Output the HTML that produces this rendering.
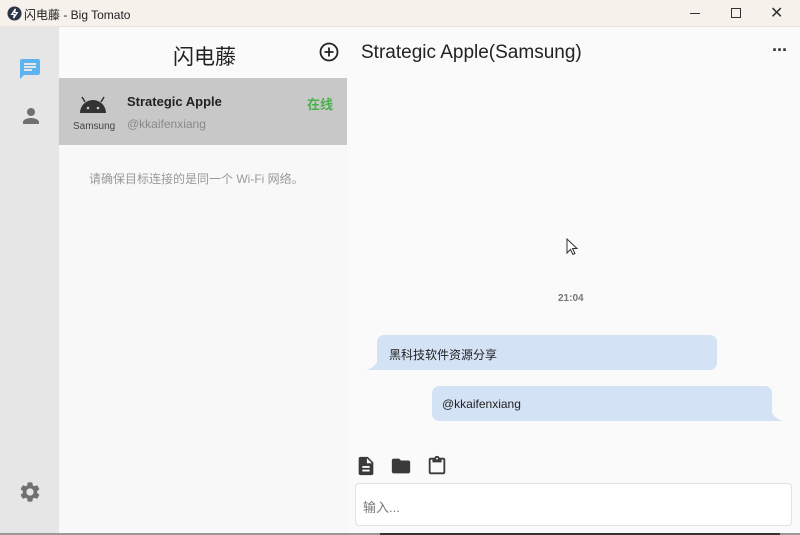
<!DOCTYPE html>
<html><head><meta charset="utf-8"><style>
*{margin:0;padding:0;box-sizing:border-box}
body{width:800px;height:535px;overflow:hidden;font-family:"Liberation Sans","Noto Sans CJK SC",sans-serif;background:#fafafa;position:relative}
.abs{position:absolute}
</style></head><body>
<div class="abs" style="left:0;top:0;width:800px;height:27px;background:#f6f1eb;border-bottom:1px solid #e8e3dd"></div>
<svg class="abs" style="left:7px;top:6px" width="15" height="15" viewBox="0 0 16 16"><circle cx="8" cy="8" r="7.5" fill="#2a3545"/><path d="M9 3 L5 9 H8 L7 13 L11 7 H8 Z" fill="none" stroke="#fff" stroke-width="1.3"/></svg>
<div class="abs" style="left:24px;top:6px;font-size:12px;color:#222">闪电藤 - Big Tomato</div>
<div class="abs" style="left:690px;top:13px;width:10px;height:1px;background:#333"></div>
<div class="abs" style="left:731px;top:8px;width:10px;height:10px;border:1px solid #333"></div>
<div class="abs" style="left:770px;top:3px;font-size:16px;color:#333">✕</div>

<div class="abs" style="left:0;top:27px;width:59px;height:508px;background:#e6e6e6"></div>
<svg class="abs" style="left:18px;top:57px" width="24" height="24" viewBox="0 0 24 24"><path d="M20 2H4c-1.1 0-2 .9-2 2v18l4-4h14c1.1 0 2-.9 2-2V4c0-1.1-.9-2-2-2zM6 9h12v2H6zm8 5H6v-2h8zm4-6H6V6h12z" fill="#5cb3f0"/></svg>
<svg class="abs" style="left:19px;top:104px" width="24" height="24" viewBox="0 0 24 24"><path d="M12 12c2.2 0 4-1.8 4-4s-1.8-4-4-4-4 1.8-4 4 1.8 4 4 4zm0 2c-2.7 0-8 1.3-8 4v2h16v-2c0-2.7-5.3-4-8-4z" fill="#707070"/></svg>
<svg class="abs" style="left:18px;top:480px" width="24" height="24" viewBox="0 0 24 24"><path d="M19.14 12.94c.04-.3.06-.61.06-.94 0-.32-.02-.64-.07-.94l2.03-1.58a.49.49 0 0 0 .12-.61l-1.92-3.32a.49.49 0 0 0-.59-.22l-2.39.96c-.5-.38-1.03-.7-1.620-.94l-.36-2.54a.48.48 0 0 0-.48-.41h-3.84c-.24 0-.43.17-.47.41l-.36 2.54c-.59.24-1.13.57-1.62.94l-2.39-.96a.48.48 0 0 0-.59.22L2.74 8.87c-.12.21-.08.47.12.61l2.03 1.58c-.05.3-.09.63-.09.94s.02.64.07.94l-2.03 1.58a.49.49 0 0 0-.12.61l1.92 3.32c.12.22.37.29.59.22l2.39-.96c.5.38 1.03.7 1.62.94l.36 2.54c.05.24.24.41.48.41h3.84c.24 0 .44-.17.47-.41l.36-2.54c.59-.24 1.13-.56 1.62-.94l2.39.96c.22.08.47 0 .59-.22l1.92-3.32c.12-.22.07-.47-.12-.61l-2.010-1.58zM12 15.6c-1.98 0-3.6-1.62-3.6-3.6s1.62-3.6 3.6-3.6 3.6 1.62 3.6 3.6-1.62 3.6-3.6 3.6z" fill="#707070"/></svg>

<div class="abs" style="left:59px;top:27px;width:288px;height:508px;background:#f8f8f8"></div>
<div class="abs" style="left:59px;top:27px;width:288px;height:51px;background:#fafafa"></div>
<div class="abs" style="left:173px;top:41px;font-size:21px;color:#222">闪电藤</div>
<svg class="abs" style="left:318px;top:41px" width="22" height="22" viewBox="0 0 22 22"><circle cx="11" cy="11" r="8.5" fill="none" stroke="#222" stroke-width="1.8"/><path d="M11 6.5v9M6.5 11h9" stroke="#222" stroke-width="1.8"/></svg>
<div class="abs" style="left:59px;top:78px;width:288px;height:67px;background:#c8c8c8"></div>
<svg class="abs" style="left:78px;top:96px" width="30" height="18" viewBox="0 0 30 18"><path d="M2 17 A13 13 0 0 1 28 17 Z" fill="#333"/><path d="M7 6 L4 1 M23 6 L26 1" stroke="#333" stroke-width="1.5"/><circle cx="10" cy="12" r="1.3" fill="#c8c8c8"/><circle cx="20" cy="12" r="1.3" fill="#c8c8c8"/></svg>
<div class="abs" style="left:73px;top:121px;font-size:10px;color:#444">Samsung</div>
<div class="abs" style="left:127px;top:94px;font-size:13px;font-weight:bold;color:#222">Strategic Apple</div>
<div class="abs" style="left:127px;top:117px;font-size:12px;color:#888">@kkaifenxiang</div>
<div class="abs" style="left:307px;top:94px;font-size:13px;font-weight:bold;color:#4cb050">在线</div>
<div class="abs" style="left:89px;top:170px;font-size:12px;color:#999">请确保目标连接的是同一个 Wi-Fi 网络。</div>

<div class="abs" style="left:361px;top:42px;font-size:19px;color:#222">Strategic Apple(Samsung)</div>
<div class="abs" style="left:772px;top:40px;font-size:18px;color:#333;letter-spacing:-1px;font-weight:bold">···</div>
<div class="abs" style="left:558px;top:293px;font-size:10px;font-weight:bold;color:#777">21:04</div>
<svg class="abs" style="left:566px;top:238px" width="12" height="18" viewBox="0 0 12 18"><path d="M1 1v14l3.5-3.5 2.5 5 2-1-2.5-5H11z" fill="#fff" stroke="#333"/></svg>

<svg class="abs" style="left:366px;top:335px" width="352" height="36" viewBox="0 0 352 36"><path d="M18 0H344a7 7 0 0 1 7 7V28a7 7 0 0 1-7 7H0q8-2 11-8V7a7 7 0 0 1 7-7z" fill="#d3e2f5"/></svg>
<div class="abs" style="left:389px;top:346px;font-size:12px;color:#222">黑科技软件资源分享</div>
<svg class="abs" style="left:432px;top:386px" width="352" height="36" viewBox="0 0 352 36"><path d="M7 0H333a7 7 0 0 1 7 7V27q3 6 11 8H7a7 7 0 0 1-7-7V7a7 7 0 0 1 7-7z" fill="#d3e2f5"/></svg>
<div class="abs" style="left:442px;top:397px;font-size:12px;color:#222">@kkaifenxiang</div>

<svg class="abs" style="left:355px;top:455px" width="22" height="22" viewBox="0 0 24 24"><path d="M14 2H6c-1.1 0-2 .9-2 2v16c0 1.1.9 2 2 2h12c1.1 0 2-.9 2-2V8l-6-6zm2 16H8v-2h8v2zm0-4H8v-2h8v2zm-3-5V3.5L18.5 9H13z" fill="#3a3a3a"/></svg>
<svg class="abs" style="left:390px;top:455px" width="22" height="22" viewBox="0 0 24 24"><path d="M10 4H4c-1.1 0-2 .9-2 2v12c0 1.1.9 2 2 2h16c1.1 0 2-.9 2-2V8c0-1.1-.9-2-2-2h-8l-2-2z" fill="#3a3a3a"/></svg>
<svg class="abs" style="left:426px;top:455px" width="22" height="22" viewBox="0 0 24 24"><path d="M19 3h-4.18C14.4 1.84 13.3 1 12 1s-2.4.84-2.82 2H5c-1.1 0-2 .9-2 2v14c0 1.1.9 2 2 2h14c1.1 0 2-.9 2-2V5c0-1.1-.9-2-2-2zm-7 0c.55 0 1 .45 1 1s-.45 1-1 1-1-.45-1-1 .45-1 1-1zm7 16H5V5h2v3h10V5h2v14z" fill="#3a3a3a"/></svg>
<div class="abs" style="left:355px;top:483px;width:437px;height:43px;background:#fff;border:1px solid #dde3ea;border-radius:4px"></div>
<div class="abs" style="left:363px;top:497px;font-size:13px;color:#777">输入...</div>
<div class="abs" style="left:0;top:533px;width:800px;height:2px;background:#999"></div>
<div class="abs" style="left:380px;top:533px;width:400px;height:2px;background:#333"></div>
</body></html>
